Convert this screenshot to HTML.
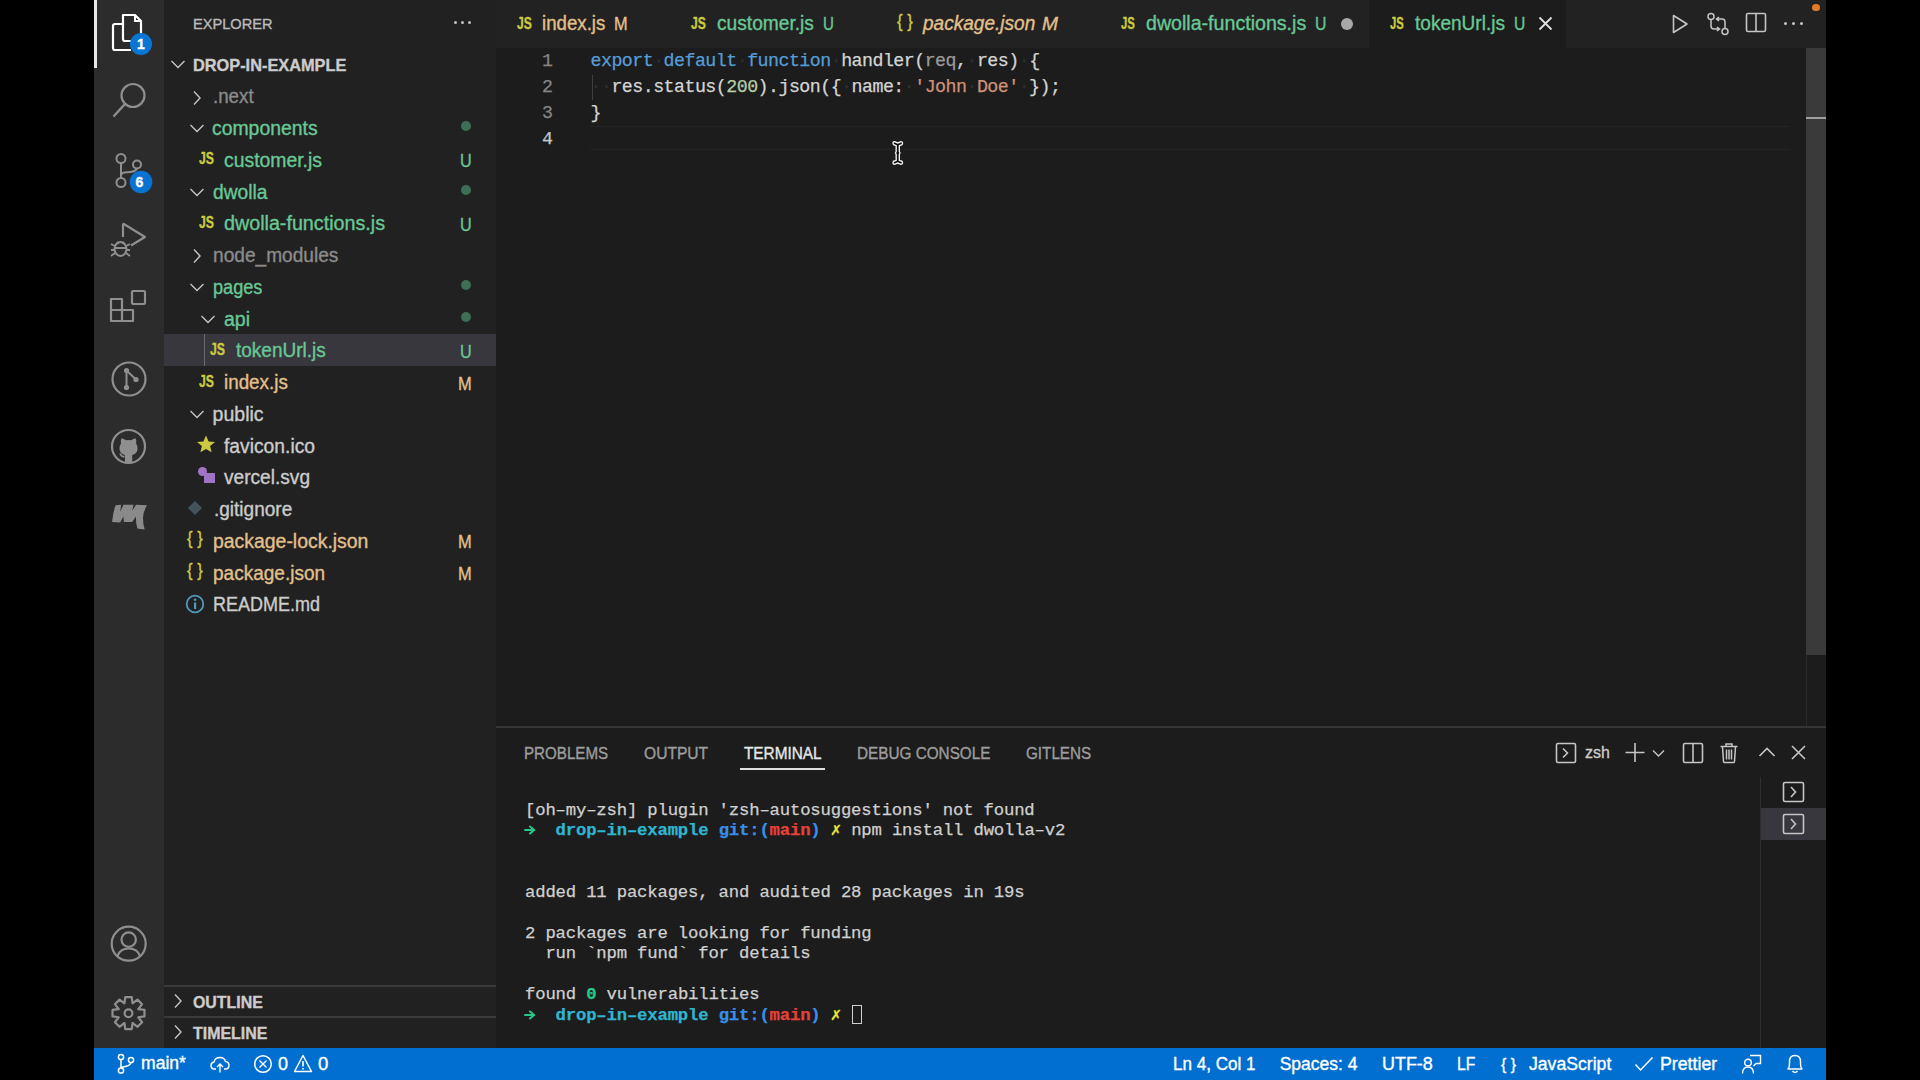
<!DOCTYPE html>
<html><head><meta charset="utf-8"><style>
html,body{margin:0;padding:0;width:1920px;height:1080px;overflow:hidden;background:#000;}
body>div,body>svg{position:absolute;}
.t{font-family:"Liberation Sans",sans-serif;white-space:pre;transform-origin:0 0;-webkit-text-stroke:0.35px currentColor;}
.m{font-family:"Liberation Mono",monospace;white-space:pre;-webkit-text-stroke:0.25px currentColor;}
</style></head><body>
<div style="left:94px;top:0px;width:70px;height:1048px;background:#2c2c2c;"></div>
<div style="left:94px;top:0px;width:3px;height:68px;background:#e8e8e8;"></div>
<div style="left:164px;top:0px;width:332px;height:1048px;background:#212121;"></div>
<div style="left:496px;top:0px;width:1330px;height:1048px;background:#1c1c1c;"></div>
<div style="left:496px;top:0px;width:1330px;height:48px;background:#222222;"></div>
<div style="left:1369px;top:0px;width:197px;height:48px;background:#1c1c1c;"></div>
<div style="left:1806px;top:48px;width:20px;height:607px;background:#3a3a3a;"></div>
<div style="left:1806px;top:117px;width:20px;height:2px;background:#a0a0a0;"></div>
<div style="left:1806px;top:655px;width:1px;height:72px;background:#2a2a2a;"></div>
<div style="left:496px;top:726px;width:1330px;height:2px;background:#353535;"></div>
<div style="left:1760px;top:777px;width:1px;height:271px;background:#2f2f2f;"></div>
<div style="left:1761px;top:808px;width:65px;height:32px;background:#37373d;"></div>
<div style="left:94px;top:1048px;width:1732px;height:32px;background:#006fcf;"></div>
<div style="left:164px;top:334px;width:332px;height:32px;background:#37373d;"></div>
<div style="left:204px;top:334px;width:1px;height:32px;background:#6a6a6a;"></div>
<div style="left:164px;top:985px;width:332px;height:2px;background:#3a3a3a;"></div>
<div style="left:164px;top:1016px;width:332px;height:2px;background:#3a3a3a;"></div>
<div class="t" style="left:192.50px;top:16.38px;font-size:15.5px;line-height:15.5px;color:#bbbbbb;transform:scaleX(0.9418);">EXPLORER</div>
<div style="left:453.5px;top:20.5px;width:3px;height:3px;background:#c0c0c0;border-radius:50%;"></div>
<div style="left:460.5px;top:20.5px;width:3px;height:3px;background:#c0c0c0;border-radius:50%;"></div>
<div style="left:467.5px;top:20.5px;width:3px;height:3px;background:#c0c0c0;border-radius:50%;"></div>
<div class="t" style="left:192.60px;top:56.61px;font-size:16.4px;line-height:16.4px;color:#cccccc;font-weight:700;transform:scaleX(0.9962);">DROP-IN-EXAMPLE</div>
<svg style="left:170px;top:59px;" width="16" height="11" viewBox="0 0 16 11"><path d="M1.5 2 L8 8.5 L14.5 2" fill="none" stroke="#c5c5c5" stroke-width="1.4"/></svg>
<div class="t" style="left:213.00px;top:87.49px;font-size:19.5px;line-height:19.5px;color:#8b8b8b;transform:scaleX(0.9604);">.next</div>
<svg style="left:192px;top:89.5px;" width="10" height="16" viewBox="0 0 10 16"><path d="M2 1.5 L8 8 L2 14.5" fill="none" stroke="#c5c5c5" stroke-width="1.4"/></svg>
<div class="t" style="left:212.40px;top:119.24px;font-size:19.5px;line-height:19.5px;color:#68c896;transform:scaleX(0.9940);">components</div>
<svg style="left:188.5px;top:123.25px;" width="16" height="10" viewBox="0 0 16 10"><path d="M1.5 2 L8 8.5 L14.5 2" fill="none" stroke="#c5c5c5" stroke-width="1.4"/></svg>
<svg style="left:459.5px;top:120.25px;" width="12" height="12" viewBox="0 0 12 12"><circle cx="6" cy="6" r="5" fill="#3f6e56"/></svg>
<div class="t" style="left:224.00px;top:150.99px;font-size:19.5px;line-height:19.5px;color:#68c896;transform:scaleX(0.9938);">customer.js</div>
<div class="t" style="left:460.00px;top:151.41px;font-size:19px;line-height:19px;color:#68c896;transform:scaleX(0.8529);">U</div>
<div class="t" style="left:199.00px;top:151.45px;font-size:16px;line-height:16px;color:#cbcb41;font-weight:700;transform:scaleX(0.7666);">JS</div>
<div class="t" style="left:212.60px;top:182.74px;font-size:19.5px;line-height:19.5px;color:#68c896;transform:scaleX(0.9837);">dwolla</div>
<svg style="left:188.8px;top:186.75px;" width="16" height="10" viewBox="0 0 16 10"><path d="M1.5 2 L8 8.5 L14.5 2" fill="none" stroke="#c5c5c5" stroke-width="1.4"/></svg>
<svg style="left:459.5px;top:183.75px;" width="12" height="12" viewBox="0 0 12 12"><circle cx="6" cy="6" r="5" fill="#3f6e56"/></svg>
<div class="t" style="left:224.00px;top:214.49px;font-size:19.5px;line-height:19.5px;color:#68c896;transform:scaleX(1.0106);">dwolla-functions.js</div>
<div class="t" style="left:460.00px;top:214.91px;font-size:19px;line-height:19px;color:#68c896;transform:scaleX(0.8529);">U</div>
<div class="t" style="left:199.00px;top:214.95px;font-size:16px;line-height:16px;color:#cbcb41;font-weight:700;transform:scaleX(0.7666);">JS</div>
<div class="t" style="left:212.60px;top:246.24px;font-size:19.5px;line-height:19.5px;color:#8b8b8b;transform:scaleX(0.9802);">node_modules</div>
<svg style="left:192px;top:248.25px;" width="10" height="16" viewBox="0 0 10 16"><path d="M2 1.5 L8 8 L2 14.5" fill="none" stroke="#c5c5c5" stroke-width="1.4"/></svg>
<div class="t" style="left:212.60px;top:277.99px;font-size:19.5px;line-height:19.5px;color:#68c896;transform:scaleX(0.9297);">pages</div>
<svg style="left:188.8px;top:282.0px;" width="16" height="10" viewBox="0 0 16 10"><path d="M1.5 2 L8 8.5 L14.5 2" fill="none" stroke="#c5c5c5" stroke-width="1.4"/></svg>
<svg style="left:459.5px;top:279.0px;" width="12" height="12" viewBox="0 0 12 12"><circle cx="6" cy="6" r="5" fill="#3f6e56"/></svg>
<div class="t" style="left:224.00px;top:309.74px;font-size:19.5px;line-height:19.5px;color:#68c896;">api</div>
<svg style="left:200px;top:313.75px;" width="16" height="10" viewBox="0 0 16 10"><path d="M1.5 2 L8 8.5 L14.5 2" fill="none" stroke="#c5c5c5" stroke-width="1.4"/></svg>
<svg style="left:459.5px;top:310.75px;" width="12" height="12" viewBox="0 0 12 12"><circle cx="6" cy="6" r="5" fill="#3f6e56"/></svg>
<div class="t" style="left:235.80px;top:341.49px;font-size:19.5px;line-height:19.5px;color:#68c896;transform:scaleX(0.9748);">tokenUrl.js</div>
<div class="t" style="left:460.00px;top:341.91px;font-size:19px;line-height:19px;color:#68c896;transform:scaleX(0.8529);">U</div>
<div class="t" style="left:210.40px;top:341.95px;font-size:16px;line-height:16px;color:#cbcb41;font-weight:700;transform:scaleX(0.7666);">JS</div>
<div class="t" style="left:224.00px;top:373.24px;font-size:19.5px;line-height:19.5px;color:#e2c08d;transform:scaleX(0.9648);">index.js</div>
<div class="t" style="left:458.00px;top:373.66px;font-size:19px;line-height:19px;color:#e2c08d;transform:scaleX(0.8656);">M</div>
<div class="t" style="left:199.00px;top:373.70px;font-size:16px;line-height:16px;color:#cbcb41;font-weight:700;transform:scaleX(0.7666);">JS</div>
<div class="t" style="left:212.60px;top:404.99px;font-size:19.5px;line-height:19.5px;color:#cccccc;">public</div>
<svg style="left:188.8px;top:409.0px;" width="16" height="10" viewBox="0 0 16 10"><path d="M1.5 2 L8 8.5 L14.5 2" fill="none" stroke="#c5c5c5" stroke-width="1.4"/></svg>
<div class="t" style="left:224.00px;top:436.74px;font-size:19.5px;line-height:19.5px;color:#cccccc;transform:scaleX(0.9877);">favicon.ico</div>
<svg style="left:196px;top:434.75px;" width="20" height="18" viewBox="0 0 20 18"><path d="M10 0.5 L12.6 6.4 L19 6.9 L14.1 11 L15.6 17.3 L10 13.9 L4.4 17.3 L5.9 11 L1 6.9 L7.4 6.4 Z" fill="#cbcb41"/></svg>
<div class="t" style="left:224.00px;top:468.49px;font-size:19.5px;line-height:19.5px;color:#cccccc;transform:scaleX(0.9798);">vercel.svg</div>
<svg style="left:197px;top:466.0px;" width="20" height="18" viewBox="0 0 20 18"><circle cx="5.5" cy="5.5" r="4.5" fill="#a074c4"/><rect x="7" y="7" width="11" height="10" fill="#a074c4"/><rect x="7" y="7" width="3" height="3" fill="#212121" opacity="0"/></svg>
<div class="t" style="left:213.80px;top:500.24px;font-size:19.5px;line-height:19.5px;color:#cccccc;transform:scaleX(0.9748);">.gitignore</div>
<svg style="left:186px;top:498.75px;" width="18" height="18" viewBox="0 0 18 18"><rect x="4" y="4" width="10" height="10" transform="rotate(45 9 9)" fill="#41535b"/></svg>
<div class="t" style="left:212.60px;top:531.99px;font-size:19.5px;line-height:19.5px;color:#e2c08d;transform:scaleX(0.9957);">package-lock.json</div>
<div class="t" style="left:458.00px;top:532.41px;font-size:19px;line-height:19px;color:#e2c08d;transform:scaleX(0.8656);">M</div>
<div class="t" style="left:187.00px;top:528.76px;font-size:18px;line-height:18px;color:#cbcb41;transform:scaleX(0.9220);">{ }</div>
<div class="t" style="left:212.60px;top:563.74px;font-size:19.5px;line-height:19.5px;color:#e2c08d;transform:scaleX(0.9755);">package.json</div>
<div class="t" style="left:458.00px;top:564.16px;font-size:19px;line-height:19px;color:#e2c08d;transform:scaleX(0.8656);">M</div>
<div class="t" style="left:187.00px;top:560.51px;font-size:18px;line-height:18px;color:#cbcb41;transform:scaleX(0.9220);">{ }</div>
<div class="t" style="left:212.60px;top:595.49px;font-size:19.5px;line-height:19.5px;color:#cccccc;transform:scaleX(0.9230);">README.md</div>
<svg style="left:185px;top:594.0px;" width="20" height="20" viewBox="0 0 20 20"><circle cx="10" cy="10" r="8.3" fill="none" stroke="#519aba" stroke-width="1.8"/><rect x="9" y="8.5" width="2.2" height="6.5" fill="#519aba"/><circle cx="10.1" cy="5.8" r="1.3" fill="#519aba"/></svg>
<div class="t" style="left:192.60px;top:994.11px;font-size:16.4px;line-height:16.4px;color:#cccccc;font-weight:700;transform:scaleX(0.9697);">OUTLINE</div>
<div class="t" style="left:192.60px;top:1025.11px;font-size:16.4px;line-height:16.4px;color:#cccccc;font-weight:700;transform:scaleX(0.9721);">TIMELINE</div>
<svg style="left:173px;top:993px;" width="10" height="16" viewBox="0 0 10 16"><path d="M2 1.5 L8 8 L2 14.5" fill="none" stroke="#c5c5c5" stroke-width="1.4"/></svg>
<svg style="left:173px;top:1024px;" width="10" height="16" viewBox="0 0 10 16"><path d="M2 1.5 L8 8 L2 14.5" fill="none" stroke="#c5c5c5" stroke-width="1.4"/></svg>
<div class="t" style="left:516.80px;top:15.95px;font-size:16px;line-height:16px;color:#cbcb41;font-weight:700;transform:scaleX(0.7563);">JS</div>
<div class="t" style="left:541.90px;top:13.99px;font-size:19.5px;line-height:19.5px;color:#e2c08d;transform:scaleX(0.9573);">index.js</div>
<div class="t" style="left:614.00px;top:15.26px;font-size:18px;line-height:18px;color:#e2c08d;transform:scaleX(0.9070);">M</div>
<div class="t" style="left:691.00px;top:15.95px;font-size:16px;line-height:16px;color:#cbcb41;font-weight:700;transform:scaleX(0.7563);">JS</div>
<div class="t" style="left:716.70px;top:13.99px;font-size:19.5px;line-height:19.5px;color:#68c896;transform:scaleX(0.9826);">customer.js</div>
<div class="t" style="left:822.50px;top:15.26px;font-size:18px;line-height:18px;color:#68c896;transform:scaleX(0.8387);">U</div>
<div class="t" style="left:896.60px;top:12.26px;font-size:18px;line-height:18px;color:#cbcb41;transform:scaleX(0.9279);">{ }</div>
<div class="t" style="left:922.78px;top:13.99px;font-size:19.5px;line-height:19.5px;color:#e2c08d;font-style:italic;transform:scaleX(0.9766);">package.json</div>
<div class="t" style="left:1042.00px;top:15.26px;font-size:18px;line-height:18px;color:#e2c08d;font-style:italic;transform:scaleX(1.0658);">M</div>
<div class="t" style="left:1121.20px;top:15.95px;font-size:16px;line-height:16px;color:#cbcb41;font-weight:700;transform:scaleX(0.7052);">JS</div>
<div class="t" style="left:1146.00px;top:13.99px;font-size:19.5px;line-height:19.5px;color:#68c896;transform:scaleX(1.0056);">dwolla-functions.js</div>
<div class="t" style="left:1315.00px;top:15.26px;font-size:18px;line-height:18px;color:#68c896;transform:scaleX(0.8772);">U</div>
<div style="left:1341px;top:17.5px;width:12px;height:12px;background:#a8a8a8;border-radius:50%;"></div>
<div class="t" style="left:1390.30px;top:15.95px;font-size:16px;line-height:16px;color:#cbcb41;font-weight:700;transform:scaleX(0.7001);">JS</div>
<div class="t" style="left:1415.00px;top:13.99px;font-size:19.5px;line-height:19.5px;color:#68c896;transform:scaleX(0.9770);">tokenUrl.js</div>
<div class="t" style="left:1513.60px;top:15.26px;font-size:18px;line-height:18px;color:#68c896;transform:scaleX(0.8695);">U</div>
<svg style="left:1538px;top:16px;" width="15" height="15" viewBox="0 0 15 15"><path d="M1.5 1.5 L13.5 13.5 M13.5 1.5 L1.5 13.5" stroke="#e0e0e0" stroke-width="1.8"/></svg>
<svg style="left:1670px;top:13px;" width="20" height="22" viewBox="0 0 20 22"><path d="M3.5 2.5 L17 11 L3.5 19.5 Z" fill="none" stroke="#c5c5c5" stroke-width="1.6" stroke-linejoin="round"/></svg>
<svg style="left:1706px;top:12px;" width="24" height="25" viewBox="0 0 24 25"><circle cx="5" cy="4.5" r="3" fill="none" stroke="#c5c5c5" stroke-width="1.5"/><circle cx="19" cy="19.5" r="3" fill="none" stroke="#c5c5c5" stroke-width="1.5"/><path d="M5 7.5 V14 Q5 17 8 17 H13 M11 15 L13.5 17 L11 19" fill="none" stroke="#c5c5c5" stroke-width="1.5"/><path d="M19 16.5 V10 Q19 7 16 7 H11 M13 5 L10.5 7 L13 9" fill="none" stroke="#c5c5c5" stroke-width="1.5"/></svg>
<svg style="left:1745px;top:12px;" width="22" height="22" viewBox="0 0 22 22"><rect x="1.5" y="1.5" width="19" height="18" rx="1.5" fill="none" stroke="#c5c5c5" stroke-width="1.6"/><path d="M11 1.5 V19.5" stroke="#c5c5c5" stroke-width="1.6"/></svg>
<div style="left:1783.5px;top:21.5px;width:3px;height:3px;background:#c5c5c5;border-radius:50%;"></div>
<div style="left:1791.5px;top:21.5px;width:3px;height:3px;background:#c5c5c5;border-radius:50%;"></div>
<div style="left:1799.5px;top:21.5px;width:3px;height:3px;background:#c5c5c5;border-radius:50%;"></div>
<div style="left:1812.3px;top:3.8px;width:7.5px;height:7.5px;background:#e07a2a;border-radius:50%;"></div>
<div class="m" style="left:542.00px;top:52.18px;font-size:18.3px;line-height:18.3px;letter-spacing:-0.530px;"><span style="color:#858585">1</span></div>
<div class="m" style="left:542.00px;top:78.18px;font-size:18.3px;line-height:18.3px;letter-spacing:-0.530px;"><span style="color:#858585">2</span></div>
<div class="m" style="left:542.00px;top:104.18px;font-size:18.3px;line-height:18.3px;letter-spacing:-0.530px;"><span style="color:#858585">3</span></div>
<div class="m" style="left:542.00px;top:130.38px;font-size:18.3px;line-height:18.3px;letter-spacing:-0.530px;"><span style="color:#c6c6c6">4</span></div>
<div class="m" style="left:590.50px;top:52.18px;font-size:18.3px;line-height:18.3px;letter-spacing:-0.530px;"><span style="color:#569cd6">export</span><span style="color:#2e2e2e">·</span><span style="color:#569cd6">default</span><span style="color:#2e2e2e">·</span><span style="color:#569cd6">function</span><span style="color:#2e2e2e">·</span><span style="color:#d4d4d4">handler(</span><span style="color:#9a9a9a">req</span><span style="color:#d4d4d4">,</span><span style="color:#2e2e2e">·</span><span style="color:#d4d4d4">res)</span><span style="color:#2e2e2e">·</span><span style="color:#d4d4d4">{</span></div>
<div class="m" style="left:590.50px;top:78.18px;font-size:18.3px;line-height:18.3px;letter-spacing:-0.530px;"><span style="color:#2e2e2e">··</span><span style="color:#d4d4d4">res.status(</span><span style="color:#b5cea8">200</span><span style="color:#d4d4d4">).json({</span><span style="color:#2e2e2e">·</span><span style="color:#d4d4d4">name:</span><span style="color:#2e2e2e">·</span><span style="color:#ce9178">'John</span><span style="color:#2e2e2e">·</span><span style="color:#ce9178">Doe'</span><span style="color:#2e2e2e">·</span><span style="color:#d4d4d4">});</span></div>
<div class="m" style="left:590.50px;top:104.18px;font-size:18.3px;line-height:18.3px;letter-spacing:-0.530px;"><span style="color:#d4d4d4">}</span></div>
<div style="left:592px;top:75px;width:1px;height:25px;background:#404040;"></div>
<div style="left:590px;top:126px;width:1200px;height:1px;background:#242424;"></div>
<div style="left:590px;top:149px;width:1200px;height:1px;background:#242424;"></div>
<svg style="left:890px;top:140px;" width="16" height="26" viewBox="0 0 16 26"><path d="M3 3 Q3 1.5 5 1.8 L7.75 3 L10.5 1.8 Q12.5 1.5 12.5 3.5 Q12.5 5 10.5 5.3 L9.3 5.6 L9.3 11.5 L10 13 L9.3 14.5 L9.3 20.4 L10.5 20.7 Q12.5 21 12.5 22.5 Q12.5 24.5 10.5 24.2 L7.75 23 L5 24.2 Q3 24.5 3 22.5 Q3 21 5 20.7 L6.2 20.4 L6.2 14.5 L5.5 13 L6.2 11.5 L6.2 5.6 L5 5.3 Q3 5 3 3 Z" fill="#0a0a0a" stroke="#f0f0f0" stroke-width="1.4" stroke-linejoin="round"/></svg>
<div class="t" style="left:524.30px;top:745.62px;font-size:15.8px;line-height:15.8px;color:#9d9d9d;transform:scaleX(0.9579);">PROBLEMS</div>
<div class="t" style="left:643.90px;top:745.62px;font-size:15.8px;line-height:15.8px;color:#9d9d9d;transform:scaleX(0.9869);">OUTPUT</div>
<div class="t" style="left:743.90px;top:745.62px;font-size:15.8px;line-height:15.8px;color:#e7e7e7;transform:scaleX(0.9714);">TERMINAL</div>
<div style="left:740px;top:768px;width:85px;height:2px;background:#e0e0e0;"></div>
<div class="t" style="left:856.90px;top:745.62px;font-size:15.8px;line-height:15.8px;color:#9d9d9d;transform:scaleX(0.9685);">DEBUG CONSOLE</div>
<div class="t" style="left:1025.80px;top:745.62px;font-size:15.8px;line-height:15.8px;color:#9d9d9d;transform:scaleX(0.9644);">GITLENS</div>
<svg style="left:1555px;top:742px;" width="23" height="23" viewBox="0 0 23 23"><rect x="1.5" y="1.5" width="19" height="19" rx="1.5" fill="none" stroke="#c5c5c5" stroke-width="1.6"/><path d="M8 6.5 L12.5 11 L8 15.5" fill="none" stroke="#c5c5c5" stroke-width="1.6"/></svg>
<div class="t" style="left:1584.50px;top:744.21px;font-size:17px;line-height:17px;color:#cccccc;transform:scaleX(0.9375);">zsh</div>
<svg style="left:1624px;top:742px;" width="22" height="22" viewBox="0 0 22 22"><path d="M11 1 V20 M1.5 10.5 H20.5" stroke="#c5c5c5" stroke-width="1.6"/></svg>
<svg style="left:1652px;top:749px;" width="13" height="9" viewBox="0 0 13 9"><path d="M1 1.5 L6.5 7 L12 1.5" fill="none" stroke="#c5c5c5" stroke-width="1.4"/></svg>
<svg style="left:1682px;top:742px;" width="22" height="22" viewBox="0 0 22 22"><rect x="1.5" y="1.5" width="19" height="19" rx="1.5" fill="none" stroke="#c5c5c5" stroke-width="1.6"/><path d="M11 1.5 V20.5" stroke="#c5c5c5" stroke-width="1.6"/></svg>
<svg style="left:1719px;top:742px;" width="20" height="22" viewBox="0 0 20 22"><path d="M1.5 4.5 H18.5 M7 4.5 V2 H13 V4.5 M3.5 4.5 L4.5 19.5 Q4.5 20.5 5.5 20.5 H14.5 Q15.5 20.5 15.5 19.5 L16.5 4.5 M7.5 7.5 V17.5 M10 7.5 V17.5 M12.5 7.5 V17.5" fill="none" stroke="#c5c5c5" stroke-width="1.5"/></svg>
<svg style="left:1758px;top:746px;" width="18" height="12" viewBox="0 0 18 12"><path d="M1.5 10 L9 2.5 L16.5 10" fill="none" stroke="#c5c5c5" stroke-width="1.6"/></svg>
<svg style="left:1790px;top:744px;" width="17" height="17" viewBox="0 0 17 17"><path d="M2 2 L15 15 M15 2 L2 15" stroke="#c5c5c5" stroke-width="1.6"/></svg>
<svg style="left:1782px;top:781px;" width="23" height="22" viewBox="0 0 23 22"><rect x="1.5" y="1.5" width="20" height="19" rx="1.5" fill="none" stroke="#c5c5c5" stroke-width="1.6"/><path d="M9 6 L13.5 11 L9 16" fill="none" stroke="#c5c5c5" stroke-width="1.6"/></svg>
<svg style="left:1782px;top:812.5px;" width="23" height="22" viewBox="0 0 23 22"><rect x="1.5" y="1.5" width="20" height="19" rx="1.5" fill="none" stroke="#c5c5c5" stroke-width="1.6"/><path d="M9 6 L13.5 11 L9 16" fill="none" stroke="#c5c5c5" stroke-width="1.6"/></svg>
<div class="m" style="left:525.00px;top:801.95px;font-size:17.3px;line-height:17.3px;letter-spacing:-0.180px;"><span style="color:#d0d0d0">[oh–my–zsh] plugin 'zsh–autosuggestions' not found</span></div>
<div class="m" style="left:525.00px;top:822.45px;font-size:17.3px;line-height:17.3px;letter-spacing:-0.180px;"><span style="color:#25c886;font-weight:700">   </span><span style="color:#2fb5d0;font-weight:700">drop–in–example </span><span style="color:#3a8ee8;font-weight:700">git:(</span><span style="color:#e8403a;font-weight:700">main</span><span style="color:#3a8ee8;font-weight:700">) </span><span style="color:#e8e83a;font-weight:700">✗ </span><span style="color:#d0d0d0">npm install dwolla–v2</span></div>
<div class="m" style="left:525.00px;top:883.95px;font-size:17.3px;line-height:17.3px;letter-spacing:-0.180px;"><span style="color:#d0d0d0">added 11 packages, and audited 28 packages in 19s</span></div>
<div class="m" style="left:525.00px;top:924.95px;font-size:17.3px;line-height:17.3px;letter-spacing:-0.180px;"><span style="color:#d0d0d0">2 packages are looking for funding</span></div>
<div class="m" style="left:525.00px;top:945.45px;font-size:17.3px;line-height:17.3px;letter-spacing:-0.180px;"><span style="color:#d0d0d0">  run `npm fund` for details</span></div>
<div class="m" style="left:525.00px;top:986.45px;font-size:17.3px;line-height:17.3px;letter-spacing:-0.180px;"><span style="color:#d0d0d0">found </span><span style="color:#25c886;font-weight:700">0</span><span style="color:#d0d0d0"> vulnerabilities</span></div>
<div class="m" style="left:525.00px;top:1006.95px;font-size:17.3px;line-height:17.3px;letter-spacing:-0.180px;"><span style="color:#25c886;font-weight:700">   </span><span style="color:#2fb5d0;font-weight:700">drop–in–example </span><span style="color:#3a8ee8;font-weight:700">git:(</span><span style="color:#e8403a;font-weight:700">main</span><span style="color:#3a8ee8;font-weight:700">) </span><span style="color:#e8e83a;font-weight:700">✗ </span></div>
<svg style="left:523px;top:825.1px;" width="14" height="10" viewBox="0 0 14 10"><path d="M2 5 H11 M7 1.5 L11.2 5 L7 8.5" fill="none" stroke="#25c886" stroke-width="2" stroke-linecap="round" stroke-linejoin="round"/></svg>
<svg style="left:523px;top:1009.6px;" width="14" height="10" viewBox="0 0 14 10"><path d="M2 5 H11 M7 1.5 L11.2 5 L7 8.5" fill="none" stroke="#25c886" stroke-width="2" stroke-linecap="round" stroke-linejoin="round"/></svg>
<div style="left:852px;top:1004.5px;width:10px;height:19px;background:transparent;border:1.5px solid #d0d0d0;box-sizing:border-box;"></div>
<svg style="left:116px;top:1053px;" width="20" height="22" viewBox="0 0 20 22"><circle cx="5" cy="4" r="2.6" fill="none" stroke="#ffffff" stroke-width="1.5"/><circle cx="5" cy="17.5" r="2.6" fill="none" stroke="#ffffff" stroke-width="1.5"/><circle cx="15" cy="7" r="2.6" fill="none" stroke="#ffffff" stroke-width="1.5"/><path d="M5 6.6 V14.9 M15 9.6 Q15 13 5 14.5" fill="none" stroke="#ffffff" stroke-width="1.5"/></svg>
<div class="t" style="left:141.10px;top:1054.98px;font-size:17.5px;line-height:17.5px;color:#ffffff;transform:scaleX(1.0034);">main*</div>
<svg style="left:210px;top:1056px;" width="20" height="17" viewBox="0 0 20 17"><path d="M6 13 H4.5 Q1 13 1 9.5 Q1 6.5 4 6 Q5 1.5 10 1.5 Q14.5 1.5 15.5 5.5 Q19 6 19 9.5 Q19 13 15.5 13 H14" fill="none" stroke="#ffffff" stroke-width="1.4"/><path d="M10 16.5 V8 M7 11 L10 8 L13 11" fill="none" stroke="#ffffff" stroke-width="1.4"/></svg>
<svg style="left:253px;top:1054px;" width="20" height="20" viewBox="0 0 20 20"><circle cx="10" cy="10" r="8.3" fill="none" stroke="#ffffff" stroke-width="1.5"/><path d="M6.5 6.5 L13.5 13.5 M13.5 6.5 L6.5 13.5" stroke="#ffffff" stroke-width="1.4"/></svg>
<div class="t" style="left:277.90px;top:1055.68px;font-size:17.5px;line-height:17.5px;color:#ffffff;transform:scaleX(1.0277);">0</div>
<svg style="left:293px;top:1054px;" width="20" height="19" viewBox="0 0 20 19"><path d="M10 1.5 L18.5 17.5 H1.5 Z" fill="none" stroke="#ffffff" stroke-width="1.5" stroke-linejoin="round"/><path d="M10 7 V12.5 M10 14 V15.5" stroke="#ffffff" stroke-width="1.6"/></svg>
<div class="t" style="left:318.00px;top:1055.68px;font-size:17.5px;line-height:17.5px;color:#ffffff;transform:scaleX(1.0586);">0</div>
<div class="t" style="left:1173.30px;top:1055.68px;font-size:17.5px;line-height:17.5px;color:#ffffff;transform:scaleX(0.9748);">Ln 4, Col 1</div>
<div class="t" style="left:1279.70px;top:1055.68px;font-size:17.5px;line-height:17.5px;color:#ffffff;">Spaces: 4</div>
<div class="t" style="left:1381.70px;top:1055.68px;font-size:17.5px;line-height:17.5px;color:#ffffff;transform:scaleX(1.0247);">UTF-8</div>
<div class="t" style="left:1456.70px;top:1055.68px;font-size:17.5px;line-height:17.5px;color:#ffffff;transform:scaleX(0.8961);">LF</div>
<div class="t" style="left:1501.00px;top:1056.11px;font-size:17px;line-height:17px;color:#ffffff;transform:scaleX(0.9327);">{ }</div>
<div class="t" style="left:1528.50px;top:1055.68px;font-size:17.5px;line-height:17.5px;color:#ffffff;transform:scaleX(1.0075);">JavaScript</div>
<svg style="left:1634px;top:1056px;" width="20" height="16" viewBox="0 0 20 16"><path d="M1.5 8.5 L6.5 14 L18.5 1.5" fill="none" stroke="#ffffff" stroke-width="1.5"/></svg>
<div class="t" style="left:1659.80px;top:1055.68px;font-size:17.5px;line-height:17.5px;color:#ffffff;transform:scaleX(1.0141);">Prettier</div>
<svg style="left:1741px;top:1054px;" width="21" height="21" viewBox="0 0 21 21"><circle cx="7" cy="8.5" r="3.3" fill="none" stroke="#ffffff" stroke-width="1.4"/><path d="M1.5 19.5 Q1.5 13 7 13 Q12.5 13 12.5 19.5" fill="none" stroke="#ffffff" stroke-width="1.4"/><path d="M9 1.5 H19.5 V9.5 H15 L12.5 12" fill="none" stroke="#ffffff" stroke-width="1.4"/></svg>
<svg style="left:1785px;top:1053px;" width="20" height="22" viewBox="0 0 20 22"><path d="M3 16 Q4.5 14 4.5 11 V8.5 Q4.5 2.5 10 2.5 Q15.5 2.5 15.5 8.5 V11 Q15.5 14 17 16 Z" fill="none" stroke="#ffffff" stroke-width="1.4" stroke-linejoin="round"/><path d="M7.5 18 Q10 21 12.5 18" fill="none" stroke="#ffffff" stroke-width="1.4"/></svg>
<svg style="left:110px;top:12px;" width="38" height="42" viewBox="0 0 38 42"><path d="M13 3 H25 L31 9 V27 Q31 29 29 29 H15 Q13 29 13 27 Z" fill="none" stroke="#ffffff" stroke-width="2.2" stroke-linejoin="round"/><path d="M25 3 V9 H31" fill="none" stroke="#ffffff" stroke-width="2"/><path d="M13 12 H5 Q3 12 3 14 V36 Q3 38 5 38 H21" fill="none" stroke="#ffffff" stroke-width="2.2"/></svg>
<svg style="left:129px;top:32px;" width="24" height="24" viewBox="0 0 24 24"><circle cx="12" cy="12" r="11" fill="#0a76d4"/></svg>
<div class="t" style="left:137px;top:36px;font-size:14px;line-height:16px;color:#fff;font-weight:700">1</div>
<svg style="left:108px;top:80px;" width="40" height="42" viewBox="0 0 40 42"><circle cx="25" cy="15.5" r="11.5" fill="none" stroke="#8f8f8f" stroke-width="2.2"/><path d="M17 24 L5.5 36.5" stroke="#8f8f8f" stroke-width="2.4"/></svg>
<svg style="left:108px;top:148px;" width="36" height="42" viewBox="0 0 36 42"><circle cx="13" cy="10.5" r="4.5" fill="none" stroke="#8f8f8f" stroke-width="2"/><circle cx="29" cy="16.5" r="4" fill="none" stroke="#8f8f8f" stroke-width="2"/><circle cx="13" cy="34.5" r="4.5" fill="none" stroke="#8f8f8f" stroke-width="2"/><path d="M13 15 V30 M13 27 Q13.5 24.5 19 24.3 Q27.5 24 29 20.5" fill="none" stroke="#8f8f8f" stroke-width="2"/></svg>
<svg style="left:128.5px;top:170px;" width="24" height="24" viewBox="0 0 24 24"><circle cx="12" cy="12" r="11.3" fill="#0a72d2"/></svg>
<div class="t" style="left:135.5px;top:174px;font-size:14px;line-height:16px;color:#fff;font-weight:700">6</div>
<svg style="left:108px;top:220px;" width="42" height="40" viewBox="0 0 42 40"><path d="M15 3.5 L37 17 L23 25.5" fill="none" stroke="#8f8f8f" stroke-width="2.2" stroke-linejoin="round"/><path d="M15 3.5 V17" stroke="#8f8f8f" stroke-width="2.2"/><ellipse cx="12.5" cy="29" rx="6" ry="7" fill="none" stroke="#8f8f8f" stroke-width="2"/><path d="M3 24 L7 26 M3 30 H6.5 M3 36 L7 33 M22 24 L18 26 M22 30 H18.5 M22 36 L18 33 M9 22 L10.5 24 M16 22 L14.5 24 M7 28 H18" stroke="#8f8f8f" stroke-width="1.8"/></svg>
<svg style="left:108px;top:288px;" width="42" height="42" viewBox="0 0 42 42"><path d="M3 11 H14 V22 H3 Z M3 22 H14 V33 H3 Z M14 22 H25 V33 H14 Z" fill="none" stroke="#8f8f8f" stroke-width="2.2" stroke-linejoin="round"/><rect x="24" y="3" width="13" height="13" rx="1" fill="none" stroke="#8f8f8f" stroke-width="2.2"/></svg>
<svg style="left:109px;top:359px;" width="40" height="40" viewBox="0 0 40 40"><circle cx="20" cy="20" r="16.5" fill="none" stroke="#8f8f8f" stroke-width="2.2"/><circle cx="17.5" cy="11.5" r="2.6" fill="#8f8f8f"/><circle cx="27" cy="20.5" r="2.6" fill="#8f8f8f"/><circle cx="17.5" cy="28.5" r="2.6" fill="#8f8f8f"/><path d="M17.5 11.5 V28.5 M17.5 11.5 L27 20.5" stroke="#8f8f8f" stroke-width="2"/></svg>
<svg style="left:109px;top:427px;" width="40" height="40" viewBox="0 0 40 40"><circle cx="19.5" cy="19.5" r="16.5" fill="none" stroke="#8f8f8f" stroke-width="2.2"/><path d="M16 35.5 V28 Q11.5 27 10.5 22.5 Q10 19 12 16.5 Q11.5 13.5 12.5 11.3 Q15 11.8 16.8 13.3 Q19.5 12.6 22.2 13.3 Q24.2 11.8 26.6 11.3 Q27.6 13.5 27.1 16.5 Q29 19 28.6 22.5 Q27.5 27 23.2 28 V35.5 Z" fill="#8f8f8f"/><path d="M15.5 29.5 Q12.5 30 11 26.5" fill="none" stroke="#8f8f8f" stroke-width="1.8"/></svg>
<svg style="left:110px;top:503px;" width="40" height="30" viewBox="0 0 40 30"><path d="M5.6 2.3 L11.1 1.8 L10.2 8.8 L13.4 1.8 L23.6 1.8 L22.2 7.8 L26 1.8 L37 2.3 Q33 9 33 15 Q33 22 34.7 26.4 Q30 26 27.3 25.4 Q25.8 20 25.9 13.4 L22.2 18.9 L13.9 18.9 L13.4 13.4 L10.2 19.4 L2.1 18.9 Q3 9 5.6 2.3 Z" fill="#8a8a8a"/></svg>
<svg style="left:109px;top:924px;" width="40" height="40" viewBox="0 0 40 40"><circle cx="19.7" cy="19.7" r="17" fill="none" stroke="#8f8f8f" stroke-width="2.2"/><circle cx="19.7" cy="15.6" r="7.2" fill="none" stroke="#8f8f8f" stroke-width="2.2"/><path d="M8.5 32 Q11 24.5 19.7 24.5 Q28.5 24.5 31 32" fill="none" stroke="#8f8f8f" stroke-width="2.2"/></svg>
<svg style="left:109px;top:993px;" width="40" height="40" viewBox="0 0 40 40"><polygon points="16.26,4.22 22.74,4.22 23.56,10.41 28.51,6.61 33.09,11.19 29.29,16.14 35.48,16.96 35.48,23.44 29.29,24.26 33.09,29.21 28.51,33.79 23.56,29.99 22.74,36.18 16.26,36.18 15.44,29.99 10.49,33.79 5.91,29.21 9.71,24.26 3.52,23.44 3.52,16.96 9.71,16.14 5.91,11.19 10.49,6.61 15.44,10.41" fill="none" stroke="#8f8f8f" stroke-width="2.2" stroke-linejoin="round"/><circle cx="19.5" cy="20.2" r="3.9" fill="none" stroke="#8f8f8f" stroke-width="2.2"/></svg>
</body></html>
